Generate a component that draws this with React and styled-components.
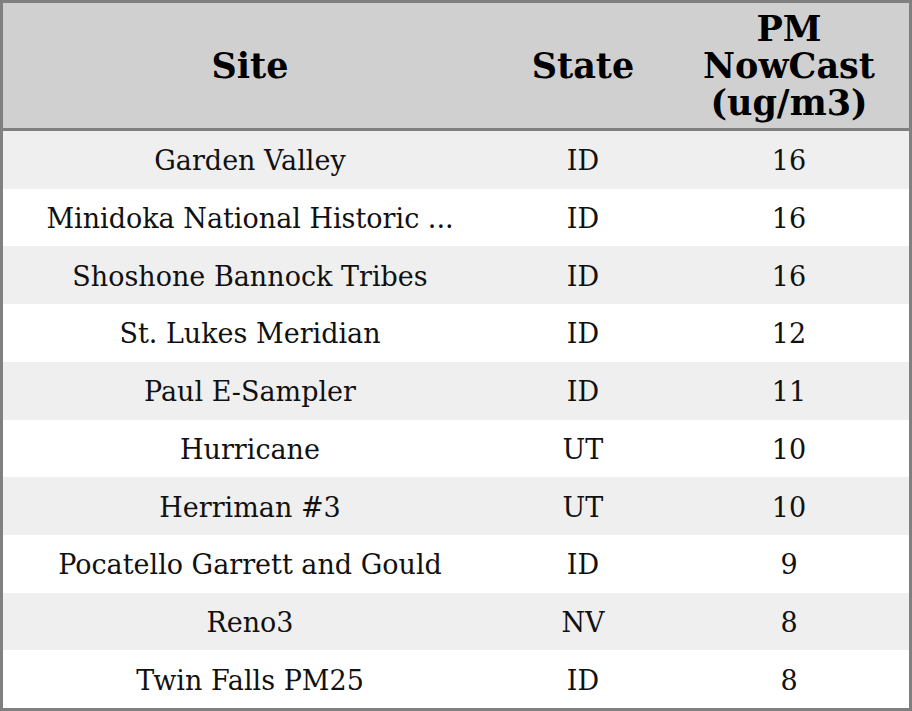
import React from "react"
import styled, { createGlobalStyle } from "styled-components"

const rows = [
  { site: "Garden Valley", state: "ID", pm: 16 },
  { site: "Minidoka National Historic ...", state: "ID", pm: 16 },
  { site: "Shoshone Bannock Tribes", state: "ID", pm: 16 },
  { site: "St. Lukes Meridian", state: "ID", pm: 12 },
  { site: "Paul E-Sampler", state: "ID", pm: 11 },
  { site: "Hurricane", state: "UT", pm: 10 },
  { site: "Herriman #3", state: "UT", pm: 10 },
  { site: "Pocatello Garrett and Gould", state: "ID", pm: 9 },
  { site: "Reno3", state: "NV", pm: 8 },
  { site: "Twin Falls PM25", state: "ID", pm: 8 },
]

const GlobalStyle = createGlobalStyle`
  html, body {
    margin: 0;
    padding: 0;
    background: #ffffff;
  }
`

const App = () => (
  <>
    <GlobalStyle />
    <Table>
      <Header>
        <HeadCell>Site</HeadCell>
        <HeadCell>State</HeadCell>
        <HeadCell>
          PM
          <br />
          NowCast
          <br />
          (ug/m3)
        </HeadCell>
      </Header>
      {rows.map((row, i) => (
        <Row key={row.site} striped={i % 2 === 0}>
          <Cell>{row.site}</Cell>
          <Cell>{row.state}</Cell>
          <Cell>{row.pm}</Cell>
        </Row>
      ))}
    </Table>
  </>
)

const Table = styled.div`
  width: 912px;
  height: 711px;
  box-sizing: border-box;
  border: 3px solid #808080;
  display: flex;
  flex-direction: column;
  font-family: "DejaVu Serif", serif;
  color: #111111;
`

const Header = styled.div`
  display: grid;
  grid-template-columns: 494px 172px 1fr;
  height: 128px;
  flex-shrink: 0;
  box-sizing: border-box;
  background: #d0d0d0;
  border-bottom: 3px solid #808080;
`

const HeadCell = styled.div`
  display: flex;
  align-items: center;
  justify-content: center;
  text-align: center;
  font-size: 35px;
  font-weight: bold;
  line-height: 37px;
  color: #000000;
`

const Row = styled.div.withConfig({ shouldForwardProp: (p) => p !== "striped" })`
  display: grid;
  grid-template-columns: 494px 172px 1fr;
  flex: 1;
  background: ${(p) => (p.striped ? "#efefef" : "#ffffff")};
`

const Cell = styled.div`
  display: flex;
  align-items: center;
  justify-content: center;
  padding-top: 2px;
  font-size: 27px;
  white-space: nowrap;
`

export default App
